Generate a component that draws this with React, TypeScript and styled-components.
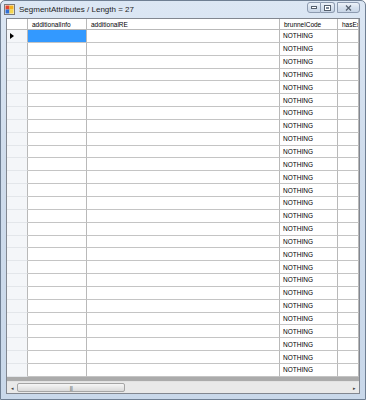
import { FC } from 'react';
import styled, { createGlobalStyle } from 'styled-components';

const GlobalStyle = createGlobalStyle`
  html, body {
    margin: 0;
    padding: 0;
    background: #ffffff;
  }
  * {
    box-sizing: border-box;
  }
`;

const Window = styled.div`
  width: 366px;
  height: 400px;
  display: flex;
  flex-direction: column;
  background: linear-gradient(180deg, #dce7f4 0%, #cfdcec 40%, #c9d8ea 100%);
  border: 1px solid #6f7f93;
  border-radius: 5px 5px 0 0;
  font-family: "Liberation Sans", Arial, sans-serif;
  overflow: hidden;
`;

const TitleBar = styled.div`
  height: 17px;
  display: flex;
  align-items: center;
  padding: 0 5px 0 3px;
  gap: 4px;
`;

const Title = styled.span`
  flex: 1;
  font-size: 8px;
  color: #1e1e1e;
  white-space: nowrap;
`;

const Caption = styled.div`
  display: flex;
  align-self: flex-start;
  margin-top: 1px;
`;

const CaptionButton = styled.div<{ $wide?: boolean; $first?: boolean; $last?: boolean }>`
  width: ${p => (p.$wide ? 23 : 14)}px;
  height: 11px;
  display: flex;
  align-items: center;
  justify-content: center;
  border: 1px solid #8d9bb0;
  border-left-width: ${p => (p.$first ? 1 : 0)}px;
  border-radius: ${p => (p.$first ? '3px 0 0 3px' : p.$last ? '0 3px 3px 0' : '0')};
  background: linear-gradient(180deg, #eef3f9 0%, #d6e1ee 50%, #c8d5e6 100%);
  margin-left: ${p => (p.$wide ? 2 : 0)}px;
  ${p => (p.$wide ? 'border-left-width: 1px; border-radius: 0 3px 3px 0;' : '')}
`;

const Client = styled.div`
  flex: 1;
  display: flex;
  flex-direction: column;
  margin: 0 5px 5px 5px;
  border: 1px solid #828790;
  background: #ababab;
  overflow: hidden;
`;

const Grid = styled.div`
  display: grid;
  grid-template-columns: 21px 59px 193px 58px 1fr;
  grid-template-rows: 11px;
  grid-auto-rows: 12.85px;
  background: #ffffff;
  font-size: 6.5px;
  color: #000000;
`;

const HeaderCell = styled.div`
  display: flex;
  align-items: center;
  padding-left: 4px;
  border-right: 1px solid #b9b9b9;
  border-bottom: 1px solid #b9b9b9;
  background: #ffffff;
  white-space: nowrap;
  overflow: hidden;
`;

const RowHeader = styled.div`
  display: flex;
  align-items: center;
  padding-left: 3px;
  border-right: 1px solid #b9b9b9;
  border-bottom: 1px solid #e3e6ea;
  background: #f4f6f9;
`;

const Cell = styled.div<{ $selected?: boolean }>`
  display: flex;
  align-items: center;
  padding-left: 3px;
  border-right: 1px solid #b9b9b9;
  border-bottom: 1px solid #c4c4c4;
  background: ${p => (p.$selected ? '#3399ff' : '#ffffff')};
  white-space: nowrap;
  overflow: hidden;
`;

const Filler = styled.div`
  flex: 1;
  background: #ababab;
`;

const HScroll = styled.div`
  height: 12px;
  display: flex;
  align-items: stretch;
  background: #e9e9e9;
  border-top: 1px solid #e2e2e2;
`;

const ScrollArrow = styled.div`
  width: 10px;
  display: flex;
  align-items: center;
  justify-content: center;
  font-size: 5px;
  color: #404040;
`;

const Thumb = styled.div`
  width: 108px;
  margin: 1px 0;
  display: flex;
  align-items: center;
  justify-content: center;
  border: 1px solid #a5a5a5;
  border-radius: 2px;
  background: linear-gradient(180deg, #f6f6f6 0%, #e8e8e8 50%, #dadada 100%);
  font-size: 5px;
  color: #606060;
  letter-spacing: -0.5px;
`;

const Track = styled.div`
  flex: 1;
`;

const columns = ['additionalInfo', 'additionalRE', 'brunnelCode', 'hasExt'];
const rows = Array.from({ length: 27 }, (_, i) => i);

const AppIcon: FC = () => (
  <svg width="11" height="11" viewBox="0 0 11 11">
    <rect x="0.5" y="0.5" width="10" height="10" fill="#f4f4f4" stroke="#7a7a7a" />
    <rect x="1.5" y="1.5" width="4" height="4" fill="#e2452f" />
    <rect x="5.5" y="1.5" width="4" height="4" fill="#f3b21c" />
    <rect x="1.5" y="5.5" width="4" height="4" fill="#2f6fd6" />
    <rect x="5.5" y="5.5" width="4" height="4" fill="#f5d64d" />
  </svg>
);

const App: FC = () => {
  return (
    <>
      <GlobalStyle />
      <Window>
        <TitleBar>
          <AppIcon />
          <Title>SegmentAttributes / Length = 27</Title>
          <Caption>
            <CaptionButton $first>
              <svg width="6" height="3" viewBox="0 0 6 3">
                <rect x="0.5" y="0.5" width="5" height="2" fill="#ffffff" stroke="#55606e" strokeWidth="1" />
              </svg>
            </CaptionButton>
            <CaptionButton $last>
              <svg width="7" height="6" viewBox="0 0 7 6">
                <rect x="0.5" y="0.5" width="6" height="5" fill="#ffffff" stroke="#55606e" strokeWidth="1" />
                <rect x="2" y="2" width="3" height="2" fill="#7b8796" />
              </svg>
            </CaptionButton>
            <CaptionButton $wide>
              <svg width="7" height="6" viewBox="0 0 7 6">
                <path d="M1 0.5 L6 5.5 M6 0.5 L1 5.5" stroke="#55606e" strokeWidth="1.2" fill="none" />
              </svg>
            </CaptionButton>
          </Caption>
        </TitleBar>
        <Client>
          <Grid>
            <HeaderCell />
            {columns.map(c => (
              <HeaderCell key={c}>{c}</HeaderCell>
            ))}
            {rows.map(r => (
              <Row key={r} index={r} />
            ))}
          </Grid>
          <Filler />
          <HScroll>
            <ScrollArrow>◂</ScrollArrow>
            <Thumb>|||</Thumb>
            <Track />
            <ScrollArrow>▸</ScrollArrow>
          </HScroll>
        </Client>
      </Window>
    </>
  );
};

const Row: FC<{ index: number }> = ({ index }) => (
  <>
    <RowHeader>
      {index === 0 && (
        <svg width="4" height="6" viewBox="0 0 4 6">
          <path d="M0 0 L4 3 L0 6 Z" fill="#000000" />
        </svg>
      )}
    </RowHeader>
    <Cell $selected={index === 0} />
    <Cell />
    <Cell>NOTHING</Cell>
    <Cell />
  </>
);

export default App;
